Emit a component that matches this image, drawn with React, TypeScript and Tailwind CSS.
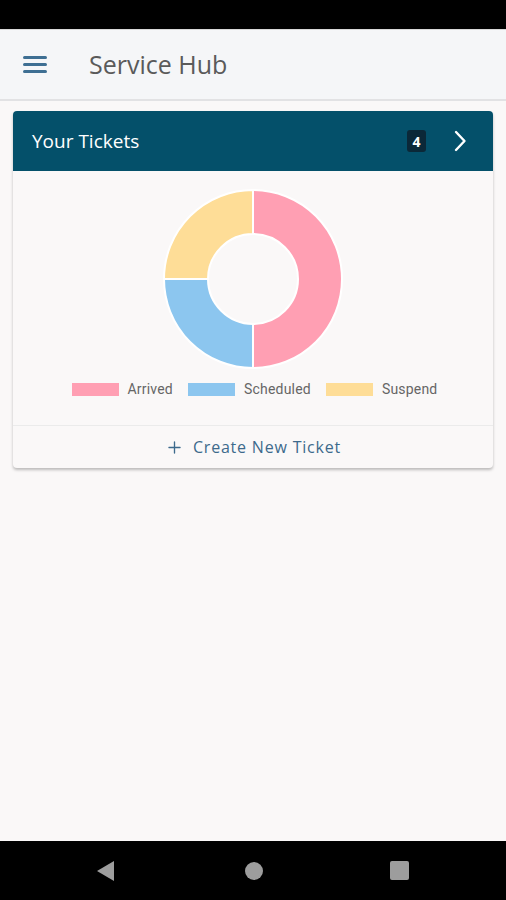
import { Plus } from "lucide-react";

const donutPath = (cx: number, cy: number, r1: number, r2: number, a0: number, a1: number) => {
  const p = (r: number, a: number) => [cx + r * Math.sin(a), cy - r * Math.cos(a)];
  const [x0, y0] = p(r1, a0);
  const [x1, y1] = p(r1, a1);
  const [x2, y2] = p(r2, a1);
  const [x3, y3] = p(r2, a0);
  const large = a1 - a0 > Math.PI ? 1 : 0;
  return `M${x0} ${y0} A${r1} ${r1} 0 ${large} 1 ${x1} ${y1} L${x2} ${y2} A${r2} ${r2} 0 ${large} 0 ${x3} ${y3} Z`;
};

const slices = [
  { label: "Arrived", color: "#ff9fb3", from: 0, to: Math.PI },
  { label: "Scheduled", color: "#8cc6ef", from: Math.PI, to: Math.PI * 1.5 },
  { label: "Suspend", color: "#fedd97", from: Math.PI * 1.5, to: Math.PI * 2 },
];

const App = () => {
  return (
    <div className="w-[506px] h-[900px] flex flex-col bg-[#faf8f8] overflow-hidden" style={{ fontFamily: "'Open Sans', sans-serif" }}>
      {/* Status bar */}
      <div className="h-[29px] bg-black shrink-0" />

      {/* App bar */}
      <header className="h-[72px] shrink-0 flex items-center bg-[#f5f6f8] border-t border-[#d8d8d8] border-b-2 border-b-[#e2e2e4]">
        <div className="ml-[23px] w-[24px] flex flex-col gap-[4.5px]">
          <span className="h-[2.5px] bg-[#3e6f93] rounded-sm" />
          <span className="h-[2.5px] bg-[#3e6f93] rounded-sm" />
          <span className="h-[2.5px] bg-[#3e6f93] rounded-sm" />
        </div>
        <h1 className="ml-[42px] text-[25px] text-[#5a5a5a] leading-none">Service Hub</h1>
      </header>

      {/* Content */}
      <main className="flex-1 px-[13px] pt-[10px]">
        <section className="rounded-[4px] bg-[#faf8f8] shadow-[0_2px_3px_rgba(0,0,0,0.25)] overflow-hidden">
          <div className="h-[60px] bg-[#04506a] flex items-center pl-[19px] pr-[26px]">
            <span className="text-white text-[19px] flex-1">Your Tickets</span>
            <span className="w-[19px] h-[22px] rounded-[3px] bg-[#0b2838] text-white text-[14px] font-bold flex items-center justify-center mr-[27px]">4</span>
            <svg width="14" height="22" viewBox="0 0 14 22" fill="none">
              <path d="M3 2 L11.5 11 L3 20" stroke="white" strokeWidth="2.4" strokeLinecap="round" strokeLinejoin="round" />
            </svg>
          </div>

          <div className="flex flex-col items-center pt-[17px]">
            <svg width="182" height="182" viewBox="0 0 182 182">
              {slices.map((s) => (
                <path key={s.label} d={donutPath(91, 91, 89, 45, s.from, s.to)} fill={s.color} stroke="#ffffff" strokeWidth="2" />
              ))}
            </svg>
            <div className="flex items-center mt-[9px] pl-[3px] text-[14px] text-[#666666]" style={{ fontFamily: "Roboto, sans-serif" }}>
              {slices.map((s) => (
                <div key={s.label} className="flex items-center mr-[15px] last:mr-0">
                  <span className="w-[47px] h-[13px] mr-[9px]" style={{ backgroundColor: s.color }} />
                  <span className="tracking-[0.2px]">{s.label}</span>
                </div>
              ))}
            </div>
          </div>

          <div className="mt-[25px] border-t border-[#ebebeb] h-[43px] flex items-center justify-center text-[#3d6a8c] text-[16px] tracking-[0.8px]">
            <Plus className="w-[19px] h-[19px] mr-[9px]" strokeWidth={1.7} />
            <span>Create New Ticket</span>
          </div>
        </section>
      </main>

      {/* Nav bar */}
      <nav className="h-[59px] shrink-0 bg-black flex items-center justify-center pr-[2px]">
        <svg width="20" height="22" viewBox="0 0 20 22">
          <path d="M18 1 L18 21 L1 11 Z" fill="#9d9d9d" />
        </svg>
        <span className="ml-[129px] w-[18px] h-[18px] rounded-full bg-[#9d9d9d]" />
        <span className="ml-[127px] w-[19px] h-[19px] rounded-[2px] bg-[#9d9d9d]" />
      </nav>
    </div>
  );
};

export default App;
